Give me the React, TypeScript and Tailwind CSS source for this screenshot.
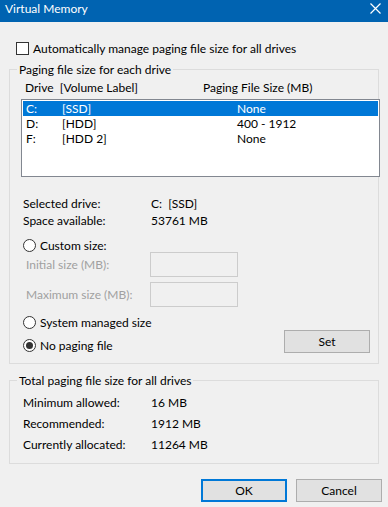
import React from 'react'

const font = { fontFamily: 'Lato, "Noto Sans", sans-serif' }

const drives = [
  { letter: 'C:', label: '[SSD]', size: 'None', selected: true },
  { letter: 'D:', label: '[HDD]', size: '400 - 1912', selected: false },
  { letter: 'F:', label: '[HDD 2]', size: 'None', selected: false },
]

const Radio: React.FC<{ checked?: boolean; label: string }> = ({ checked, label }) => (
  <div className="flex items-center h-[17px]">
    <span className="w-[13px] h-[13px] rounded-full border border-[#333] bg-white flex items-center justify-center mr-[4px]">
      {checked && <span className="w-[7px] h-[7px] rounded-full bg-[#333]" />}
    </span>
    <span>{label}</span>
  </div>
)

const Btn: React.FC<{ label: string; primary?: boolean; className?: string }> = ({ label, primary, className }) => (
  <button
    className={
      'h-[23px] w-[86px] bg-[#e1e1e1] text-[#000] flex items-center justify-center ' +
      (primary ? 'border-2 border-[#0078d7] ' : 'border border-[#adadad] ') +
      (className || '')
    }
  >
    {label}
  </button>
)

export default function App() {
  return (
    <div className="w-[388px] h-[507px] bg-[#f0f0f0] text-[12px] leading-[15px] text-black overflow-hidden" style={font}>
      <div className="h-[22px] bg-[#0063b1] flex items-center justify-between pl-[5px] pr-[7px] pb-[7px] pt-[2px] text-white">
        <span className="text-[12px]">Virtual Memory</span>
        <svg width="11" height="11" viewBox="0 0 11 11" className="mt-[-1px]">
          <path d="M0.5 0.5 L10.5 10.5 M10.5 0.5 L0.5 10.5" stroke="white" strokeWidth="1.2" />
        </svg>
      </div>

      <div className="pl-[16px] pt-[19px] flex items-center">
        <span className="w-[13px] h-[13px] border border-[#333] bg-white mr-[4px]" />
        <span>Automatically manage paging file size for all drives</span>
      </div>

      <fieldset className="mx-[9px] mt-[6px] border border-[#dcdcdc] h-[302px] pl-[11px] pr-0 relative">
        <legend className="px-[2px] ml-[-4px]">Paging file size for each drive</legend>
        <div className="flex mt-[3px]">
          <span className="w-[14px]" />
          <span className="w-[180px] ml-[-12px] pl-[2px]">Drive&nbsp;&nbsp;[Volume Label]</span>
          <span>Paging File Size (MB)</span>
        </div>
        <div className="mt-[4px] mr-[-2px] h-[78px] bg-white border border-[#828790] p-[1px]">
          {drives.map(d => (
            <div
              key={d.letter}
              className={'flex h-[15px] items-center pl-[3px] ' + (d.selected ? 'bg-[#0078d7] text-white' : '')}
            >
              <span className="w-[36px]">{d.letter}</span>
              <span className="w-[175px]">{d.label}</span>
              <span>{d.size}</span>
            </div>
          ))}
        </div>

        <div className="mt-[19px] ml-[2px]">
          <div className="flex">
            <span className="w-[128px]">Selected drive:</span>
            <span>C:&nbsp;&nbsp;[SSD]</span>
          </div>
          <div className="flex mt-[2px]">
            <span className="w-[128px]">Space available:</span>
            <span>53761 MB</span>
          </div>
        </div>

        <div className="mt-[9px] ml-[2px]">
          <Radio label="Custom size:" />
        </div>
        <div className="flex items-center mt-[-2px] ml-[5px] text-[#a0a0a0]">
          <span className="w-[124px]">Initial size (MB):</span>
          <span className="w-[88px] h-[25px] border border-[#cccccc] bg-[#f0f0f0]" />
        </div>
        <div className="flex items-center mt-[5px] ml-[5px] text-[#a0a0a0]">
          <span className="w-[124px]">Maximum size (MB):</span>
          <span className="w-[88px] h-[25px] border border-[#cccccc] bg-[#f0f0f0]" />
        </div>
        <div className="mt-[7px] ml-[2px]">
          <Radio label="System managed size" />
        </div>
        <div className="flex items-center justify-between ml-[2px] mr-[8px] mt-[-2px]">
          <div className="mt-[8px]">
            <Radio checked label="No paging file" />
          </div>
          <Btn label="Set" />
        </div>
      </fieldset>

      <fieldset className="mx-[9px] mt-[9px] border border-[#dcdcdc] h-[91px] pl-[13px]">
        <legend className="px-[2px] ml-[-6px]">Total paging file size for all drives</legend>
        <div className="mt-[7px] flex flex-col gap-[6px]">
          <div className="flex"><span className="w-[128px]">Minimum allowed:</span><span>16 MB</span></div>
          <div className="flex"><span className="w-[128px]">Recommended:</span><span>1912 MB</span></div>
          <div className="flex"><span className="w-[128px]">Currently allocated:</span><span>11264 MB</span></div>
        </div>
      </fieldset>

      <div className="flex justify-end gap-[9px] pr-[6px] mt-[15px]">
        <Btn label="OK" primary />
        <Btn label="Cancel" />
      </div>
    </div>
  )
}
